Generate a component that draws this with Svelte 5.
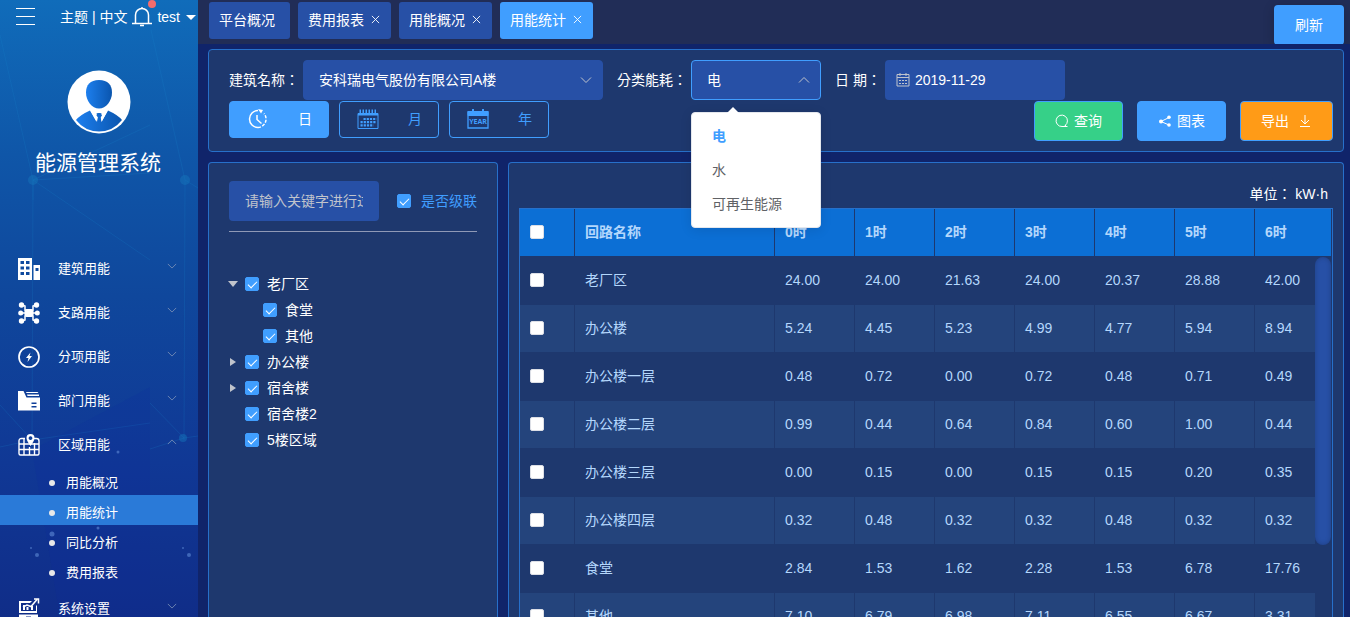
<script lang="ts">
  interface TreeNode {
    label: string;
    level: number;
    arrow?: 'open' | 'closed';
  }

  const menu = [
    { label: '建筑用能', icon: 'building' },
    { label: '支路用能', icon: 'branch' },
    { label: '分项用能', icon: 'bolt' },
    { label: '部门用能', icon: 'folder' },
    { label: '区域用能', icon: 'map', children: ['用能概况', '用能统计', '同比分析', '费用报表'] },
    { label: '系统设置', icon: 'settings' },
  ];

  const tabs = ['平台概况', '费用报表', '用能概况', '用能统计'];

  const periods = [
    { label: '日', icon: 'day' },
    { label: '月', icon: 'month' },
    { label: '年', icon: 'year' },
  ];

  const energyTypes = ['电', '水', '可再生能源'];

  const tree: TreeNode[] = [
    { label: '老厂区', level: 0, arrow: 'open' },
    { label: '食堂', level: 1 },
    { label: '其他', level: 1 },
    { label: '办公楼', level: 0, arrow: 'closed' },
    { label: '宿舍楼', level: 0, arrow: 'closed' },
    { label: '宿舍楼2', level: 0 },
    { label: '5楼区域', level: 0 },
  ];

  const hours = ['0时', '1时', '2时', '3时', '4时', '5时', '6时'];

  const rows = [
    { name: '老厂区', values: ['24.00', '24.00', '21.63', '24.00', '20.37', '28.88', '42.00'] },
    { name: '办公楼', values: ['5.24', '4.45', '5.23', '4.99', '4.77', '5.94', '8.94'] },
    { name: '办公楼一层', values: ['0.48', '0.72', '0.00', '0.72', '0.48', '0.71', '0.49'] },
    { name: '办公楼二层', values: ['0.99', '0.44', '0.64', '0.84', '0.60', '1.00', '0.44'] },
    { name: '办公楼三层', values: ['0.00', '0.15', '0.00', '0.15', '0.15', '0.20', '0.35'] },
    { name: '办公楼四层', values: ['0.32', '0.48', '0.32', '0.32', '0.48', '0.32', '0.32'] },
    { name: '食堂', values: ['2.84', '1.53', '1.62', '2.28', '1.53', '6.78', '17.76'] },
    { name: '其他', values: ['7.10', '6.79', '6.98', '7.11', '6.55', '6.67', '3.31'] },
  ];

  let activeTab = $state('用能统计');
  let activePage = $state('用能统计');
  let period = $state('日');
  let energyType = $state('电');
  let menuOpen = $state(true);

  function pickType(type: string) {
    energyType = type;
    menuOpen = false;
  }
</script>

{#snippet chevron(up: boolean)}
  <svg class="chevron" class:up viewBox="0 0 12 8" aria-hidden="true">
    <path d="M1 1.5 6 6.5 11 1.5" fill="none" stroke="currentColor" />
  </svg>
{/snippet}

{#snippet menuIcon(name: string)}
  <svg class="menu-icon" viewBox="0 0 22 22" fill="#fff" aria-hidden="true">
    {#if name === 'building'}
      <path fill-rule="evenodd" d="M0 0h14v22H0zM2.500 3v3h3.500V3zm5.500 0v3h3.500V3zM2.500 8.500v3h3.500v-3zm5.500 0v3h3.500v-3zM2.500 14v3h3.500v-3zm5.500 0v3h3.500v-3z" />
      <path fill-rule="evenodd" d="M15.500 7H22v15h-6.500zM17.500 10v3h3v-3z" />
    {:else if name === 'branch'}
      <path d="M4 3 7 4V8L11 11 15 8V4L18 3M4 19 7 18V14L11 11 15 14V18L18 19M2 11H20" fill="none" stroke="#fff" stroke-width="1.500" />
      <rect x="6.500" y="7" width="9" height="8" rx="2" />
      <circle cx="3.500" cy="3" r="2.700" /><circle cx="18.500" cy="3" r="2.700" />
      <circle cx="2.700" cy="11" r="2.500" /><circle cx="19.300" cy="11" r="2.500" />
      <circle cx="3.500" cy="19" r="2.700" /><circle cx="18.500" cy="19" r="2.700" />
    {:else if name === 'bolt'}
      <circle cx="11" cy="11" r="10" fill="none" stroke="#fff" stroke-width="1.700" />
      <path d="M12.500 6.500 8 12h2.500L9.500 16 14 10h-2.500z" />
    {:else if name === 'folder'}
      <path fill-rule="evenodd" d="M0 1h5.500L8.500 7.500H22V20.500H0zM13.500 12.500v1.500h5v-1.500zm0 3.500v1.500h5V16z" />
      <path d="M8 2h11.500l1 1H8.500zM9 4.500h12V6H9.500z" />
    {:else if name === 'map'}
      <path d="M7 4.500H3.500Q1 4.500 1 7v12.500q0 1.500 1.500 1.500h17q1.500 0 1.500-1.500V7q0-2.500-2.500-2.500H16M1 10h20M1 15.500h20M6 4.500v16.500M11.500 13v8M16.500 9v12" fill="none" stroke="#fff" stroke-width="1.400" />
      <path fill-rule="evenodd" d="M12.500 12Q8.500 6.500 8.500 4a4 4 0 0 1 8 0q0 2.500-4 8zM12.500 2.200a1.900 1.900 0 1 0 .01 0z" />
    {:else}
      <path fill-rule="evenodd" d="M1 3h13l-2 2H3v8h15V8l1-1v8H1z" />
      <path d="M5 7h2v5H5zM8.500 9h2v3h-2zM13 8h2v4h-2z" />
      <path d="M5 9 9 7l4 1.500L19 1.500M16 1h4.500v4.500" fill="none" stroke="#fff" stroke-width="1.500" />
      <path fill-rule="evenodd" d="M1 16.500h19V22H1zM8 18.500v1.500h5v-1.500z" />
    {/if}
  </svg>
{/snippet}

{#snippet periodIcon(name: string)}
  <svg class="period-icon" viewBox="0 0 22 20" fill="none" stroke="currentColor" aria-hidden="true">
    {#if name === 'day'}
      <path d="M11 1.500A8.500 8.500 0 0 0 11 18.500" stroke-width="1.500" />
      <path d="M11 18.500A8.500 8.500 0 0 0 17 4.500" stroke-width="1.500" stroke-dasharray="3 1.500" />
      <path d="M11 0l5 1-2 3.500z" fill="currentColor" stroke="none" />
      <path d="M10 6v4.500l4.500 4" stroke-width="1.500" />
    {:else if name === 'month'}
      <path d="M1 4.500h20v15H1z" />
      <path d="M1 5.500h20" stroke-width="2" />
      <path d="M2.500 2.500h18" stroke-width="4" stroke-dasharray="1.500 1.500" />
      <path d="M6.500 10h13M3.500 13.200h16M3.500 16.400h13" stroke-width="2.200" stroke-dasharray="2.200 1" />
    {:else}
      <path d="M1 3h20v16H1z" stroke-width="1.300" />
      <path d="M1 2.500h20v4H1z" fill="currentColor" />
      <path d="M6 0v3M16 0v3" stroke-width="2" />
      <text x="11" y="15" text-anchor="middle" fill="currentColor" stroke="none">YEAR</text>
    {/if}
  </svg>
{/snippet}

<div class="layout">
  <aside class="sidebar">
    <svg class="mesh" viewBox="0 0 198 617" preserveAspectRatio="none" aria-hidden="true">
      <g fill="none" stroke="#1b86cb" stroke-opacity="0.200">
        <path d="M0 35 33 180 150 125M33 180 150 173M33 180 32 450M33 180 150 260M33 180V200M151 30 185 180 184 440M185 180 198 188" />
        <path d="M0 405 32 440 150 423M0 447 32 440M150 403 184 438 198 436M150 449 184 438" />
      </g>
      <g fill="#1677bd" fill-opacity="0.450">
        <circle cx="33" cy="180" r="5" /><circle cx="185" cy="180" r="5" />
        <circle cx="183" cy="438" r="4" />
      </g>
      <path d="M32 450 150 387V617H60z" fill="#1027a0" fill-opacity="0.150" />
      <g fill="#5f8ad6" fill-opacity="0.600">
        <circle cx="118" cy="452" r="1.500" /><circle cx="98" cy="528" r="1.500" />
        <circle cx="52" cy="534" r="2.500" /><circle cx="37" cy="555" r="2" /><circle cx="189" cy="555" r="2" />
        <circle cx="31" cy="548" r="1" /><circle cx="183" cy="548" r="1" />
      </g>
    </svg>

    <div class="topline">
      <button class="burger" aria-label="菜单"><i></i><i></i><i></i></button>
      <span class="links"><a href="#theme">主题</a> | <a href="#lang">中文</a></span>
      <button class="bell" aria-label="消息">
        <svg viewBox="0 0 20 20" aria-hidden="true">
          <path d="M0 16.500h20M3.500 16V8a6.500 6.500 0 0 1 13 0v8M8 18.500h4M10 0v2" fill="none" stroke="#fff" stroke-width="1.500" />
        </svg>
        <span class="dot"></span>
      </button>
      <button class="user">test<span class="caret"></span></button>
    </div>

    <svg class="avatar" viewBox="0 0 64 64" aria-hidden="true">
      <defs>
        <linearGradient id="person"><stop stop-color="#1d7fee" /><stop offset="1" stop-color="#0a55ae" /></linearGradient>
      </defs>
      <circle cx="32" cy="32" r="31.500" fill="#fff" />
      <path d="M32 10c9 0 13 5 13 12.500C45 31 39 38.500 32 38.500S19 31 19 22.500C19 15 23 10 32 10z" fill="url(#person)" />
      <path d="M9 50Q13 45 23 40.500L29 51 30 47 29 44 31 43h2l2 1-1 3 1 4 6-10.500Q51 45 55 50 46 61.500 32 61.500T9 50z" fill="url(#person)" />
      <path d="M23 40 30 52 31 47H33.500L34.500 52 41 40 35 44H29z" fill="#fff" />
      <path d="M30 43.500h4l1 2-1.500 2L34 52h-3.500l.5-4.500-1.500-2z" fill="#1268cc" />
    </svg>
    <h1>能源管理系统</h1>

    <nav>
      {#each menu as item}
        <button class="menu-item">
          {@render menuIcon(item.icon)}
          <span>{item.label}</span>
          {@render chevron(!!item.children)}
        </button>
        {#if item.children}
          <ul class="submenu">
            {#each item.children as child}
              <li>
                <a href="#page" class:active={child === activePage} onclick={() => (activePage = child)}>{child}</a>
              </li>
            {/each}
          </ul>
        {/if}
      {/each}
    </nav>
  </aside>

  <main>
    <header class="tabbar">
      {#each tabs as tab, i}
        <button class="tab" class:active={tab === activeTab} onclick={() => (activeTab = tab)}>
          {tab}
          {#if i > 0}
            <svg viewBox="0 0 10 10" aria-hidden="true"><path d="M1 1 9 9M9 1 1 9" stroke="currentColor" /></svg>
          {/if}
        </button>
      {/each}
      <button class="refresh">刷新</button>
    </header>

    <div class="content">
      <section class="panel filters">
        <div class="fields">
          <label for="building">建筑名称：</label>
          <div class="select building">
            <select id="building">
              <option>安科瑞电气股份有限公司A楼</option>
            </select>
            {@render chevron(false)}
          </div>

          <label for="energy">分类能耗：</label>
          <div class="select energy" class:open={menuOpen}>
            <select id="energy" bind:value={energyType}>
              {#each energyTypes as type}
                <option>{type}</option>
              {/each}
            </select>
            {@render chevron(menuOpen)}
            {#if menuOpen}
              <div class="dropdown" role="listbox" aria-label="分类能耗">
                {#each energyTypes as type}
                  <button role="option" aria-selected={type === energyType} onclick={() => pickType(type)}>{type}</button>
                {/each}
              </div>
            {/if}
          </div>

          <label for="date">日 期：</label>
          <div class="date">
            <svg viewBox="0 0 14 14" fill="none" stroke="#c0c4cc" aria-hidden="true">
              <path d="M1 1.500h12v11.500H1zM1 4.500h12M4 0v3M10 0v3" />
              <path d="M3 7.500h8M3 10.500h8" stroke-dasharray="2 1" />
            </svg>
            <input id="date" type="text" value="2019-11-29" />
          </div>
        </div>

        <div class="actions">
          <div class="periods">
            {#each periods as p}
              <button class="period" class:active={p.label === period} onclick={() => (period = p.label)}>
                {@render periodIcon(p.icon)}
                <span>{p.label}</span>
              </button>
            {/each}
          </div>
          <div class="commands">
            <button class="command query">
              <svg viewBox="0 0 14 14" aria-hidden="true">
                <path d="M10 11.500A5.700 5.700 0 1 0 7 12.500H12.500M10 11l1.500 1.500" fill="none" stroke="#fff" />
              </svg>
              查询
            </button>
            <button class="command chart">
              <svg viewBox="0 0 14 14" fill="#fff" aria-hidden="true">
                <path d="M11 3.500 3 7.500 11 11" fill="none" stroke="#fff" />
                <circle cx="3" cy="7.500" r="2" /><circle cx="11" cy="3.300" r="1.800" /><circle cx="11" cy="11" r="1.800" />
              </svg>
              图表
            </button>
            <button class="command export">
              导出
              <svg viewBox="0 0 14 14" aria-hidden="true">
                <path d="M7 1v9M3 6l4 4 4-4M2 12.500h10" fill="none" stroke="#fff" />
              </svg>
            </button>
          </div>
        </div>
      </section>

      <div class="columns">
        <section class="panel tree-panel">
          <div class="search">
            <input class="keyword" type="text" placeholder="请输入关键字进行过滤" aria-label="关键字" />
            <label class="cascade"><input type="checkbox" checked />是否级联</label>
          </div>
          <ul class="tree">
            {#each tree as node}
              <li class:child={node.level === 1}>
                <span class="arrow {node.arrow ?? ''}"></span>
                <label><input type="checkbox" checked />{node.label}</label>
              </li>
            {/each}
          </ul>
        </section>

        <section class="panel table-panel">
          <p class="unit">单位： kW·h</p>
          <div class="table-wrap">
            <table>
              <thead>
                <tr>
                  <th class="check"><input type="checkbox" aria-label="全选" /></th>
                  <th class="name">回路名称</th>
                  {#each hours as hour}
                    <th>{hour}</th>
                  {/each}
                </tr>
              </thead>
              <tbody>
                {#each rows as row}
                  <tr>
                    <td><input type="checkbox" aria-label={row.name} /></td>
                    <td>{row.name}</td>
                    {#each row.values as value}
                      <td>{value}</td>
                    {/each}
                  </tr>
                {/each}
              </tbody>
            </table>
            <div class="scroll-track"><div class="scroll-thumb"></div></div>
          </div>
        </section>
      </div>
    </div>
  </main>
</div>

<style>
  :global(body) {
    margin: 0;
  }

  .layout {
    --blue: #409eff;
    --field: #2750a6;
    --panel: #1e386e;
    --line: #2770ca;
    display: flex;
    height: 100vh;
    overflow: hidden;
    background: #10246a;
    color: #fff;
    font-family: 'Liberation Sans', 'Noto Sans CJK SC', sans-serif;
    font-size: 14px;
    line-height: 20px;
  }

  .layout * {
    box-sizing: border-box;
  }

  button,
  input,
  select {
    margin: 0;
    padding: 0;
    border: 0;
    background: none;
    color: inherit;
    font: inherit;
    outline: none;
  }

  button {
    cursor: pointer;
  }

  a {
    color: inherit;
    text-decoration: none;
  }

  ul {
    margin: 0;
    padding: 0;
    list-style: none;
  }

  .chevron {
    width: 12px;
    height: 8px;
    color: #c0c4cc;
    pointer-events: none;
  }

  .chevron.up {
    transform: rotate(180deg);
  }

  /* sidebar */
  .sidebar {
    position: relative;
    flex: 0 0 198px;
    overflow: hidden;
    background: linear-gradient(#106cba 0, #0f56a8 25%, #0f479c 48%, #103895 75%, #102d88 100%);
  }

  .mesh {
    position: absolute;
    inset: 0;
    width: 100%;
    height: 100%;
  }

  .topline,
  .avatar,
  h1,
  nav {
    position: relative;
  }

  .topline {
    display: flex;
    align-items: center;
    height: 34px;
    padding-left: 16px;
  }

  .burger {
    display: flex;
    flex-direction: column;
    gap: 7px;
    margin-right: 25px;
    padding-bottom: 2px;
  }

  .burger i {
    width: 19px;
    height: 1px;
    background: #fff;
  }

  .bell {
    position: relative;
    width: 20px;
    height: 28px;
    margin-left: 5px;
  }

  .bell svg {
    display: block;
    width: 20px;
    height: 20px;
  }

  .dot {
    position: absolute;
    top: -3px;
    right: -4px;
    width: 8px;
    height: 8px;
    border-radius: 50%;
    background: #f56c6c;
  }

  .user {
    display: flex;
    align-items: center;
    gap: 6px;
    margin-left: 5px;
  }

  .caret {
    border: 5px solid transparent;
    border-top-color: #fff;
    border-bottom: 0;
  }

  .avatar {
    display: block;
    width: 64px;
    height: 64px;
    margin: 36px auto 0;
  }

  h1 {
    margin: 12px 0 65px;
    padding-right: 2px;
    font-size: 21px;
    font-weight: 400;
    line-height: 34px;
    text-align: center;
  }

  .menu-item {
    display: flex;
    align-items: center;
    width: 100%;
    height: 44px;
    padding: 4px 21px 0 18px;
    font-size: 13px;
    text-align: left;
  }

  .menu-item span {
    flex: 1;
    margin-left: 18px;
  }

  .menu-item .chevron {
    width: 10px;
    margin-bottom: 6px;
    color: #7c92b8;
  }

  .menu-icon {
    width: 22px;
    height: 22px;
  }

  .submenu a {
    display: flex;
    align-items: center;
    height: 30px;
    padding: 6px 0 0 49px;
    font-size: 13px;
  }

  .submenu a::before {
    content: '';
    width: 6px;
    height: 6px;
    margin-right: 11px;
    border-radius: 50%;
    background: #e8e8e8;
  }

  .submenu a.active {
    background: #2a7ad8;
  }

  /* tabs */
  main {
    display: flex;
    flex: 1;
    flex-direction: column;
    min-width: 0;
  }

  .tabbar {
    display: flex;
    flex: none;
    gap: 8px;
    height: 44px;
    padding: 2px 6px 0 11px;
    overflow: hidden;
    background: #212d57;
  }

  .tab {
    display: flex;
    align-items: center;
    gap: 7px;
    height: 37px;
    padding: 0 11px 2px 10px;
    border-radius: 3px;
    background: var(--field);
    white-space: nowrap;
  }

  .tab:first-child {
    padding-right: 15px;
  }

  .tab svg {
    width: 9px;
    height: 9px;
  }

  .tab.active {
    background: var(--blue);
  }

  .refresh {
    width: 70px;
    height: 40px;
    margin: 3px 0 0 auto;
    border-radius: 4px;
    background: var(--blue);
    box-shadow: 0 2px 12px rgba(0, 0, 0, 0.2);
  }

  .content {
    display: flex;
    flex: 1;
    flex-direction: column;
    gap: 10px;
    min-height: 0;
    padding: 5px 6px 0 10px;
  }

  .panel {
    border: 1px solid var(--line);
    border-radius: 4px;
    background: var(--panel);
  }

  /* filters */
  .filters {
    padding: 10px 10px 10px 20px;
  }

  .fields {
    display: flex;
    align-items: center;
  }

  /* the TC face centres the full-width colon */
  .fields label,
  .unit {
    font-family: 'Liberation Sans', 'Noto Sans CJK TC', sans-serif;
  }

  .fields label {
    margin-right: 4px;
    white-space: nowrap;
  }

  .select {
    position: relative;
    display: flex;
    align-items: center;
    height: 40px;
    margin-right: 14px;
    padding-right: 10px;
    border: 1px solid var(--field);
    border-radius: 4px;
    background: var(--field);
  }

  .select.open {
    border-color: var(--blue);
  }

  .select select {
    flex: 1;
    min-width: 0;
    height: 38px;
    padding-left: 15px;
    appearance: none;
  }

  .building {
    width: 300px;
  }

  .energy {
    width: 130px;
  }

  .dropdown {
    position: absolute;
    z-index: 5;
    top: 51px;
    left: -1px;
    width: 130px;
    padding: 6px 0;
    border: 1px solid #e4e7ed;
    border-radius: 4px;
    background: #fff;
    box-shadow: 0 2px 12px rgba(0, 0, 0, 0.1);
  }

  .dropdown::before {
    content: '';
    position: absolute;
    top: -6px;
    left: 35px;
    border: 6px solid transparent;
    border-top: 0;
    border-bottom-color: #fff;
  }

  .dropdown button {
    display: block;
    width: 100%;
    height: 34px;
    padding-left: 20px;
    color: #606266;
    text-align: left;
  }

  .dropdown button[aria-selected='true'] {
    color: var(--blue);
    font-weight: 700;
  }

  .date {
    display: flex;
    align-items: center;
    gap: 5px;
    width: 180px;
    height: 40px;
    padding-left: 11px;
    border-radius: 4px;
    background: var(--field);
  }

  .date svg {
    flex: none;
    width: 14px;
    height: 14px;
  }

  .date input {
    flex: 1;
    min-width: 0;
  }

  .actions,
  .commands,
  .periods {
    display: flex;
  }

  .actions {
    align-items: flex-start;
    justify-content: space-between;
    margin-top: 1px;
  }

  .periods {
    gap: 10px;
  }

  .period {
    display: flex;
    align-items: center;
    justify-content: space-between;
    width: 100px;
    height: 37px;
    padding: 0 16px 2px 17px;
    border: 1px solid var(--blue);
    border-radius: 4px;
    color: var(--blue);
  }

  .period.active {
    background: var(--blue);
    color: #fff;
  }

  .period-icon {
    width: 22px;
    height: 20px;
  }

  .period-icon text {
    font-family: 'Open Sans', sans-serif;
    font-size: 7px;
    font-weight: 700;
  }

  .commands {
    gap: 14px;
  }

  .command {
    display: flex;
    align-items: center;
    gap: 5px;
    height: 40px;
    padding: 0 20px;
    border: 1px solid var(--blue);
    border-radius: 4px;
    background: var(--blue);
  }

  .command svg {
    width: 14px;
    height: 14px;
  }

  .command.query {
    background: #36d088;
  }

  .command.export {
    gap: 9px;
    background: #ff9b17;
  }

  /* lower part */
  .columns {
    display: flex;
    flex: 1;
    gap: 10px;
    min-height: 0;
  }

  .tree-panel {
    flex: 0 0 290px;
    padding: 18px 20px 0;
    border-bottom: 0;
    border-radius: 4px 4px 0 0;
  }

  .search {
    display: flex;
    align-items: center;
    justify-content: space-between;
    height: 51px;
    padding-bottom: 10px;
    border-bottom: 1px solid #8f99b6;
  }

  .keyword {
    width: 150px;
    height: 40px;
    padding: 0 16px;
    border-radius: 4px;
    background: var(--field);
  }

  .keyword::placeholder {
    color: #c0c4cc;
    opacity: 1;
  }

  input[type='checkbox'] {
    display: block;
    position: relative;
    flex: none;
    width: 14px;
    height: 14px;
    border: 1px solid #dcdfe6;
    border-radius: 2px;
    background: #fff;
    appearance: none;
  }

  input[type='checkbox']:checked {
    border-color: var(--blue);
    background: var(--blue);
  }

  input[type='checkbox']:checked::after {
    content: '';
    position: absolute;
    top: 1px;
    left: 4px;
    width: 4px;
    height: 8px;
    border: 1px solid #fff;
    border-top: 0;
    border-left: 0;
    transform: rotate(45deg);
  }

  .cascade {
    display: flex;
    align-items: center;
    gap: 10px;
    color: var(--blue);
  }

  .tree {
    padding-top: 39px;
  }

  .tree li {
    display: flex;
    align-items: center;
    height: 26px;
  }

  .tree li.child {
    padding-left: 18px;
  }

  .tree label {
    display: flex;
    align-items: center;
    gap: 8px;
  }

  .arrow {
    display: flex;
    justify-content: center;
    width: 8px;
    margin-right: 8px;
  }

  .arrow.open::before,
  .arrow.closed::before {
    content: '';
    border: 5px solid transparent;
  }

  .arrow.open::before {
    border-top: 6px solid #c0c4cc;
    border-bottom: 0;
  }

  .arrow.closed::before {
    border-width: 4px;
    border-left: 6px solid #c0c4cc;
    border-right: 0;
  }

  .table-panel {
    display: flex;
    flex: 1;
    flex-direction: column;
    min-width: 0;
    padding: 21px 10px 0;
    border-bottom: 0;
    border-radius: 4px 4px 0 0;
  }

  .unit {
    margin: 0;
    padding: 0 5px 4px 0;
    text-align: right;
  }

  .table-wrap {
    position: relative;
    flex: 1;
    min-height: 0;
    overflow: hidden;
    border: 1px solid var(--line);
    border-bottom: 0;
  }

  table {
    width: 100%;
    min-width: 812px;
    border-collapse: separate;
    border-spacing: 0;
    table-layout: fixed;
    color: #b4d7fc;
  }

  th,
  td {
    width: 80px;
    height: 48px;
    padding: 0 10px 2px;
    border-right: 1px solid var(--panel);
    border-bottom: 1px solid var(--panel);
    text-align: left;
  }

  th:last-child {
    width: auto;
  }

  th {
    background: #0c6fd5;
  }

  .check {
    width: 55px;
  }

  .name {
    width: 200px;
  }

  tbody tr:nth-child(even) td {
    background: #24447c;
  }

  .scroll-track {
    position: absolute;
    top: 48px;
    right: 0;
    bottom: 0;
    width: 17px;
    padding-right: 1px;
    background: var(--panel);
  }

  .scroll-thumb {
    height: 80%;
    border-radius: 8px;
    background: var(--field);
    box-shadow: inset 0 0 5px rgba(0, 0, 0, 0.2);
  }
</style>
